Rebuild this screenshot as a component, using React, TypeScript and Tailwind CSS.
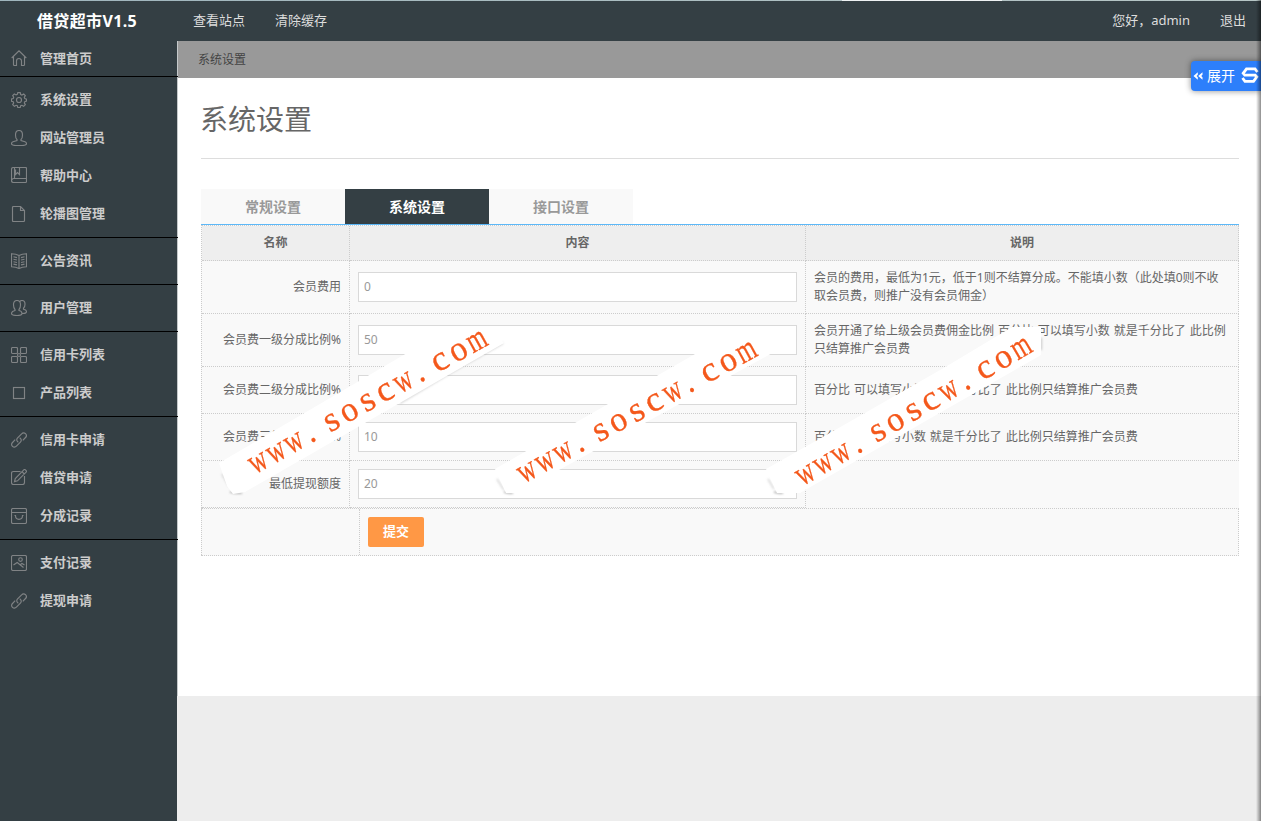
import React from 'react';

type IconName =
  | 'home'
  | 'gear'
  | 'user'
  | 'album'
  | 'file'
  | 'book'
  | 'users'
  | 'grid'
  | 'square'
  | 'link'
  | 'edit'
  | 'bag'
  | 'image';

interface MenuItem {
  label: string;
  icon: IconName;
}

const menuGroups: MenuItem[][] = [
  [
    { label: '系统设置', icon: 'gear' },
    { label: '网站管理员', icon: 'user' },
    { label: '帮助中心', icon: 'album' },
    { label: '轮播图管理', icon: 'file' },
  ],
  [{ label: '公告资讯', icon: 'book' }],
  [{ label: '用户管理', icon: 'users' }],
  [
    { label: '信用卡列表', icon: 'grid' },
    { label: '产品列表', icon: 'square' },
  ],
  [
    { label: '信用卡申请', icon: 'link' },
    { label: '借贷申请', icon: 'edit' },
    { label: '分成记录', icon: 'bag' },
  ],
  [
    { label: '支付记录', icon: 'image' },
    { label: '提现申请', icon: 'link' },
  ],
];

const rows = [
  { name: '会员费用', value: '0', height: 'h-[53px]', note: '会员的费用，最低为1元，低于1则不结算分成。不能填小数（此处填0则不收取会员费，则推广没有会员佣金）' },
  { name: '会员费一级分成比例%', value: '50', height: 'h-[53px]', note: '会员开通了给上级会员费佣金比例 百分比 可以填写小数 就是千分比了 此比例只结算推广会员费' },
  { name: '会员费二级分成比例%', value: '', height: 'h-[47px]', note: '百分比 可以填写小数 就是千分比了 此比例只结算推广会员费' },
  { name: '会员费三级分成比例%', value: '10', height: 'h-[47px]', note: '百分比 可以填写小数 就是千分比了 此比例只结算推广会员费' },
  { name: '最低提现额度', value: '20', height: 'h-[47px]', note: null },
];

const gearPath =
  'M6.8 .6h2.4l.5 1.9 1.2.5 1.8-1 1.6 1.6-1 1.8.5 1.2 1.7.5v2l-1.7.6-.5 1.2 1 1.7-1.7 1.7-1.7-1-1.2.5-.5 1.7H6.8l-.5-1.7-1.2-.5-1.7 1-1.7-1.7 1-1.7-.5-1.2-1.7-.5V7l1.7-.5.5-1.2-1-1.8L3.3 1.9l1.8 1 1.2-.5z';

const iconShapes: Record<IconName, React.ReactNode> = {
  home: <path d="M.7 8 8 .8 15.3 8M2.500 6.500v8q0 1 1 1h2V11a2.500 2.500 0 0 1 5 0v4.500h2q1 0 1-1v-8" />,
  gear: (
    <>
      <path d={gearPath} />
      <circle cx="8" cy="8" r="2.500" />
    </>
  ),
  user: (
    <path d="M6 9.500C4.800 8.500 4.500 7 4.500 5 4.500 2.300 6 .5 8 .5s3.500 1.800 3.500 4.500c0 2-.3 3.500-1.500 4.500v1l4 1.200c1 .4 1.500 1 1.500 2 0 1.400-2.500 1.800-7.500 1.800S.5 15.100.5 13.700c0-1 .5-1.600 1.500-2l4-1.200z" />
  ),
  album: (
    <path d="M2.500.5h12q1 0 1 1v13q0 1-1 1h-12q-2 0-2-2v-11q0-2 2-2M.8 13q.4-1.500 2-1.500h12.700M3.500.8v10.700M4.500 2.500v5l2-2 2 2v-7" />
  ),
  file: <path d="M2.500.5h7l4 4v10q0 1-1 1h-10q-1 0-1-1v-13q0-1 1-1M9.500.5v4h4" />,
  book: (
    <path d="M8 2.500Q5 1 .5 .7v13Q5 14 8 15.500q3-1.500 7.500-1.800V.7Q11 1 8 2.500v13M2.500 3.800l3.500.8M2.500 6.200l3.500.8M2.500 8.700l3.500.8M2.500 11.100l3.500.8M13.500 3.800l-3.500.8M13.500 6.200l-3.500.8M13.500 8.700l-3.500.8M13.500 11.100l-3.500.8" />
  ),
  users: (
    <path d="M4 9.500C2.900 8.500 2.500 7 2.500 4.800 2.500 2 3.800.5 6 .5s3.500 1.500 3.500 4.300c0 2.200-.4 3.700-1.500 4.700v1c2 .4 3 1.400 3 3 0 1.500-1.500 2-5 2s-5.500-.5-5.500-2c0-1.600 1.500-2.600 3.500-3zM9 1.300c.6-.6 1.200-.8 2-.8 2 0 3 1.500 3 3.800 0 1.700-.4 3-1.500 3.900v1c2 .3 3 1.200 3 2.400 0 1.400-1.500 1.900-4 1.900" />
  ),
  grid: (
    <>
      <rect x=".5" y=".5" width="6" height="6" rx="1" />
      <rect x="9.500" y=".5" width="6" height="6" rx="1" />
      <rect x=".5" y="9.500" width="6" height="6" rx="1" />
      <rect x="9.500" y="9.500" width="6" height="6" rx="1" />
      <circle cx="8" cy="8" r="1.500" />
    </>
  ),
  square: <rect x="2.500" y="2.500" width="11" height="11" />,
  link: (
    <path d="M7.300 10.200C5.500 9 5.300 7.200 6.600 5.900l4-4.100c1.200-1.300 2.700-1.300 3.900-.1s1.200 2.600 0 3.800l-2.700 2.800M8.700 5.800c1.800 1.200 2 3 .7 4.300l-4 4.100c-1.200 1.300-2.700 1.300-3.900.1s-1.200-2.600 0-3.800l2.700-2.800" />
  ),
  edit: (
    <path d="M9.500 2.500h-7q-2 0-2 2v9q0 2 2 2h9q2 0 2-2V7M12.800.8q.8-.7 1.600.1l.7.7q.8.8 0 1.600L6.500 11.800l-3 .8.8-3.100zM11 2.700l2.300 2.300" />
  ),
  bag: (
    <path d="M2 .5h12q1.500 0 1.500 1.500v12q0 1.500-1.500 1.500H2Q.5 15.500.5 14V2Q.5.500 2 .5M.5 4.500h15M3.500 7.500h1q0 3.800 3.500 3.800t3.500-3.800h1" />
  ),
  image: (
    <>
      <rect x=".5" y=".5" width="15" height="15" rx="1.500" />
      <circle cx="9.500" cy="4.500" r="1.800" />
      <path d="m2.500 10 3.700-2.500 6.300 5M9.500 9.500l1.500-1 2.500 1.500" />
    </>
  ),
};

function MenuIcon({ name }: { name: IconName }) {
  const raised = name === 'home' || name === 'album' || name === 'edit';
  return (
    <svg
      width="16"
      height="16"
      viewBox="0 0 16 16"
      fill="none"
      stroke="#808385"
      strokeWidth="1.15"
      className={raised ? 'mb-0.5 shrink-0' : 'shrink-0'}
    >
      {iconShapes[name]}
    </svg>
  );
}

function MenuLink({ item }: { item: MenuItem }) {
  return (
    <a href="#" className="flex h-[38px] items-center gap-[13px] pl-[11px] text-[13px] font-bold text-[#cccccc]">
      <MenuIcon name={item.icon} />
      <span>{item.label}</span>
    </a>
  );
}

// x offset and drawn width of every glyph, along the baseline
const stampGlyphs: [string, number, number][] = [
  ['w', 2, 18],
  ['w', 22.5, 18],
  ['w', 43, 18],
  ['.', 61, 8],
  ['s', 86, 14],
  ['o', 106, 17],
  ['s', 127, 14],
  ['c', 147, 16],
  ['w', 168, 18],
  ['.', 186, 8],
  ['c', 210, 16],
  ['o', 231, 17],
  ['m', 252, 19],
];

const stamps = [
  { x: 257, y: 464, angle: -29, shape: '219,463 407,353 451,327 490,327 504,343 245,492 233,494 227,486' },
  { x: 525.7, y: 473.3, angle: -28.6, shape: '495,469 695,354 740,328 762,328 776,351 517,493 506,493' },
  { x: 804.3, y: 476, angle: -30.3, shape: '766,469 805,447 865,413 947,366 1012,327 1041,327 1041,355 800,493 777,493' },
];

function Stamps() {
  return (
    <svg width="1261" height="821" className="pointer-events-none absolute left-0 top-0 z-20">
      <defs>
        <filter id="soft" x="-20%" y="-20%" width="140%" height="140%">
          <feGaussianBlur stdDeviation="1" />
        </filter>
      </defs>
      <g filter="url(#soft)" fill="none" stroke="#999999" strokeWidth="1.5">
        <path d="M222 474l7 12M497 479l7 11M768 479l6 10" opacity=".4" />
        <path d="M230 492l6 1h6M504 492l5 1h4M774 492l5 1h4" opacity=".9" />
        <path d="M400 403l50-30 53-30" opacity=".5" />
        <path d="M1041 338v12" opacity=".7" />
      </g>
      {stamps.map((s) => (
        <g key={s.x}>
          <polygon points={s.shape} fill="#ffffff" />
          <text
            transform={`translate(${s.x} ${s.y}) rotate(${s.angle})`}
            y="8"
            fill="#f4581b"
            stroke="#f4581b"
            strokeWidth=".3"
            fontSize="35"
            className="font-['Liberation_Serif',serif]"
          >
            {stampGlyphs.map(([ch, center, width], i) => (
              <tspan key={i} x={center - width / 2} textLength={width} lengthAdjust="spacingAndGlyphs">
                {ch}
              </tspan>
            ))}
          </text>
        </g>
      ))}
    </svg>
  );
}

export default function App() {
  return (
    <div className="relative flex h-[821px] w-[1261px] flex-col overflow-hidden bg-[#ededed] font-['Noto_Sans','Noto_Sans_CJK_SC',sans-serif] text-xs text-[#666666]">
      <div className="flex h-px shrink-0 bg-linear-to-r from-[#9fb5bd] to-[#b7c6c6]">
        <div className="ml-[842px] w-[160px] bg-[#eef2f3]" />
      </div>
      <header className="flex h-10 shrink-0 items-center bg-[#343f44] text-[13px] text-[#dddddd]">
        <div className="w-[193px] pl-[37px] text-base font-bold tracking-[0.35px] text-white">借贷超市V1.5</div>
        <nav className="flex flex-1 gap-[30px]">
          <a href="#">查看站点</a>
          <a href="#">清除缓存</a>
        </nav>
        <div className="flex gap-[30px] pr-[15px]">
          <span>您好，admin</span>
          <a href="#">退出</a>
        </div>
      </header>

      <div className="flex min-h-0 flex-1">
        {/* Dividers run one pixel past the sidebar */}
        <aside className="z-10 w-[177px] shrink-0 bg-[#343f44]">
          <div className="flex h-9 w-[178px] items-center border-b border-black">
            <a href="#" className="flex items-center gap-[13px] pl-[11px] text-[13px] font-bold text-[#cccccc]">
              <MenuIcon name="home" />
              <span>管理首页</span>
            </a>
          </div>
          {menuGroups.map((group, i) => (
            <div key={i} className="w-[178px] border-b border-black py-1 last:border-b-0">
              {group.map((item) => (
                <MenuLink key={item.label} item={item} />
              ))}
            </div>
          ))}
        </aside>

        <main className="flex min-w-0 flex-1 flex-col">
          <div className="flex h-[37px] shrink-0 items-center border-l border-[#c4c8ca] bg-[#999999] pl-5 text-[#444444]">
            系统设置
          </div>
          <section className="h-[618px] border-l border-[#c4c8ca] bg-white pl-[23px] pr-[22px]">
            <h1 className="-ml-px flex h-[81px] items-center pt-0.5 text-[28px]">系统设置</h1>

            {/* Tabs */}
            <div className="-mt-px h-[31px] border-t border-[#dddddd]" />
            <div className="flex h-9 border-b border-[#5cb8f8] text-sm font-bold text-[#999999]">
              <div className="flex w-36 items-center justify-center bg-[#f9f9f9]">常规设置</div>
              <div className="flex w-36 items-center justify-center bg-[#343f44] text-white">系统设置</div>
              <div className="flex w-36 items-center justify-center bg-[#f9f9f9]">接口设置</div>
            </div>

            <form>
              <div className="border-l border-t border-dotted border-[#cccccc] bg-[#f9f9f9]">
                <div className="grid h-[35px] grid-cols-[148px_456px_433px] bg-[#eeeeee] font-bold">
                  {['名称', '内容', '说明'].map((title) => (
                    <div key={title} className="flex items-center justify-center border-b border-r border-dotted border-[#cccccc]">
                      {title}
                    </div>
                  ))}
                </div>
                {rows.map((row) => (
                  <div key={row.name} className={`grid grid-cols-[148px_456px_433px] ${row.height}`}>
                    <div className="flex items-center justify-end border-b border-r border-dotted border-[#cccccc] pr-2">
                      {row.name}
                    </div>
                    <div className="flex items-center border-b border-r border-dotted border-[#cccccc] px-2">
                      <input
                        defaultValue={row.value}
                        className="h-[30px] w-full border border-[#d9d9d9] bg-white px-[5px] pb-0.5 text-[#999999] outline-none"
                      />
                    </div>
                    {row.note !== null && (
                      <div className="flex items-center border-b border-r border-dotted border-[#cccccc] px-2 leading-[18px] [word-spacing:0.8px]">
                        {row.note}
                      </div>
                    )}
                  </div>
                ))}
              </div>

              <div className="grid h-12 grid-cols-[159px_879px] border-b border-r border-t border-dotted border-[#cccccc] bg-[#f9f9f9]">
                <div className="border-x border-dotted border-[#cccccc]" />
                <div className="flex items-center pl-2">
                  <button type="button" className="h-[30px] w-14 rounded-[2px] bg-[#ff9845] text-[13px] font-bold text-white">
                    提交
                  </button>
                </div>
              </div>
            </form>
          </section>
        </main>
      </div>

      <Stamps />

      {/* Side widget */}
      <div className="absolute right-0 top-[61px] flex h-[30px] w-[70px] items-center rounded-l-[4px] bg-[#2d7ffb] pl-[2px] text-white shadow-[0_0_6px_rgba(0,0,0,0.45)]">
        <svg width="10" height="8" viewBox="0 0 10 8" fill="#ffffff">
          <path d="M4.800.3v2.400L3.500 4l1.300 1.300v2.400L.5 4zM9.500.3v2.400L8.200 4l1.300 1.300v2.400L5.200 4z" />
        </svg>
        <span className="ml-1 text-sm">展开</span>
        <svg width="18" height="18" viewBox="0 0 18 18" fill="none" stroke="#ffffff" strokeWidth="2.800" className="mb-0.5 ml-[6px]">
          <path d="M16.500 6 14 2.800H5.500L2.200 7.300l1.600 1.900h10.400l1.600 1.700-3.300 4.400H4L1.500 12" />
        </svg>
      </div>
      <div className="pointer-events-none absolute right-0 top-0 h-full w-[5px] bg-linear-to-r from-transparent to-black/45" />
    </div>
  );
}
